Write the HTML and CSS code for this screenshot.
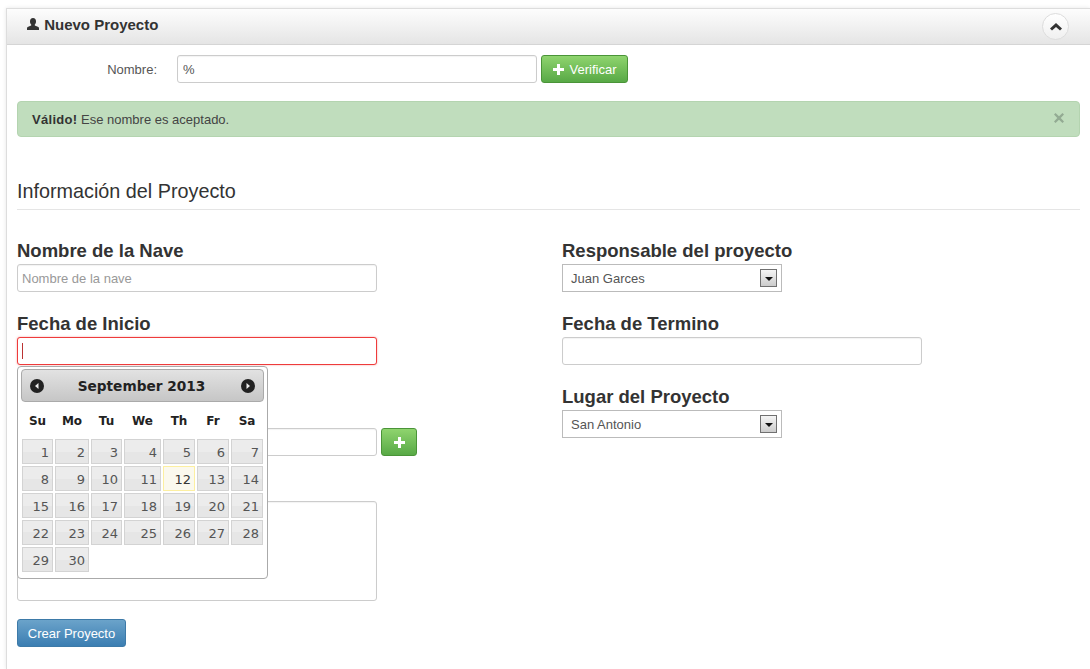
FILE: index.html
```html
<!DOCTYPE html>
<html lang="es">

<head>
    <meta charset="UTF-8">
    <title>Nuevo Proyecto</title>
    <link rel="stylesheet" href="styles.css">
</head>

<body>
    <div class="box">
        <div class="box-header">
            <h2>
                <svg class="icon-user" width="12" height="12" viewBox="0 0 12 12"><path d="M6 0c2 0 3 1.500 3 3.500 0 1.300-.5 2.500-1.200 3.100v1l3 1.200c.8.300 1.200.8 1.200 1.500V12H0v-1.700c0-.7.4-1.200 1.200-1.500l3-1.200v-1C3.500 6 3 4.800 3 3.500 3 1.500 4 0 6 0z" fill="#333"/></svg>
                Nuevo Proyecto
            </h2>
            <a class="collapse" href="#">
                <svg width="12" height="8" viewBox="0 0 12 8"><path d="M6 0l6 5.500-2 2L6 4 2 7.500l-2-2z" fill="#333"/></svg>
            </a>
        </div>

        <div class="box-content">
            <form>
                <div class="check-row">
                    <label class="check-label">Nombre:</label>
                    <input class="input check-input" type="text" value="%">
                    <button class="btn btn-green" type="button">
                        <svg width="11" height="11" viewBox="0 0 11 11"><path d="M4 0h3v4h4v3H7v4H4V7H0V4h4z" fill="#fff"/></svg>
                        Verificar
                    </button>
                </div>

                <div class="alert">
                    <span><b>Válido!</b> Ese nombre es aceptado.</span>
                    <svg class="alert-close" width="10" height="10" viewBox="0 0 10 10"><path d="M1.500 0L5 3.300 8.500 0 10 1.500 6.700 5 10 8.500 8.500 10 5 6.700 1.500 10 0 8.500 3.300 5 0 1.500z" fill="#93ab93"/></svg>
                </div>

                <h3 class="section-title">Información del Proyecto</h3>

                <div class="columns">
                    <div class="col-left">
                        <div class="group">
                            <label>Nombre de la Nave</label>
                            <input class="input" type="text" placeholder="Nombre de la nave">
                        </div>
                        <div class="group date-group">
                            <label>Fecha de Inicio</label>
                            <div class="input input-focus"><span class="caret"></span></div>

                            <div class="datepicker">
                                <div class="dp-header">
                                    <svg width="14" height="14" viewBox="0 0 14 14"><circle cx="7" cy="7" r="7" fill="#222"/><path d="M8.500 4v6L5 7z" fill="#eee"/></svg>
                                    <span class="dp-title">September 2013</span>
                                    <svg width="14" height="14" viewBox="0 0 14 14"><circle cx="7" cy="7" r="7" fill="#222"/><path d="M5.500 4v6L9 7z" fill="#eee"/></svg>
                                </div>
                                <div class="dp-grid dp-week">
                                    <span>Su</span><span>Mo</span><span>Tu</span><span>We</span><span>Th</span><span>Fr</span><span>Sa</span>
                                </div>
                                <div class="dp-grid dp-days">
                                    <a>1</a><a>2</a><a>3</a><a>4</a><a>5</a><a>6</a><a>7</a>
                                    <a>8</a><a>9</a><a>10</a><a>11</a><a class="today">12</a><a>13</a><a>14</a>
                                    <a>15</a><a>16</a><a>17</a><a>18</a><a>19</a><a>20</a><a>21</a>
                                    <a>22</a><a>23</a><a>24</a><a>25</a><a>26</a><a>27</a><a>28</a>
                                    <a>29</a><a>30</a>
                                </div>
                            </div>
                        </div>
                        <div class="group group-third">
                            <label>&nbsp;</label>
                            <div class="with-btn">
                                <input class="input" type="text">
                                <button class="btn btn-green btn-plus" type="button">
                                    <svg width="11" height="11" viewBox="0 0 11 11"><path d="M4 0h3v4h4v3H7v4H4V7H0V4h4z" fill="#fff"/></svg>
                                </button>
                            </div>
                        </div>
                        <div class="group group-area">
                            <label>&nbsp;</label>
                            <textarea class="input area"></textarea>
                        </div>
                        <button class="btn btn-blue" type="button">Crear Proyecto</button>
                    </div>

                    <div class="col-right">
                        <div class="group">
                            <label>Responsable del proyecto</label>
                            <div class="select"><span>Juan Garces</span><i class="select-arrow"></i></div>
                        </div>
                        <div class="group">
                            <label>Fecha de Termino</label>
                            <input class="input" type="text">
                        </div>
                        <div class="group">
                            <label>Lugar del Proyecto</label>
                            <div class="select"><span>San Antonio</span><i class="select-arrow"></i></div>
                        </div>
                    </div>
                </div>
            </form>
        </div>
    </div>
</body>

</html>
```

FILE: styles.css
```css
* {
    box-sizing: border-box;
}

html,
body {
    height: 669px;
    overflow: hidden;
}

body {
    margin: 0;
    background-color: #fff;
    font-family: "Liberation Sans", Arial, sans-serif;
    font-size: 13px;
    color: #555;
}

.box {
    margin: 8px 0 0 6px;
    height: 661px;
    border-left: 1px solid #ddd;
    border-top: 1px solid #ddd;
    box-shadow: 0 0 4px rgba(0, 0, 0, .1);
}

.box-header {
    display: flex;
    align-items: center;
    justify-content: space-between;
    height: 36px;
    padding: 0 21px 0 20px;
    background: linear-gradient(to bottom, #fdfdfd, #e5e5e5);
    border-bottom: 1px solid #d5d5d5;
}

.box-header h2 {
    margin: 0 0 5px;
    font-size: 15px;
    font-weight: bold;
    color: #333;
}

.icon-user {
    margin-right: 1px;
}

.collapse {
    display: flex;
    align-items: center;
    justify-content: center;
    width: 27px;
    height: 27px;
    background: linear-gradient(to bottom, #fff, #f0f0f0);
    border: 1px solid #ddd;
    border-radius: 50%;
}

.collapse svg {
    display: block;
}

.box-content {
    padding: 10px 10px 0;
}

.check-row {
    display: flex;
    align-items: center;
    gap: 4px;
}

.check-label {
    width: 156px;
    padding-right: 16px;
    text-align: right;
    color: #555;
}

.input {
    display: block;
    width: 360px;
    height: 28px;
    padding: 4px 4px;
    background-color: #fff;
    border: 1px solid #ccc;
    border-radius: 3px;
    font-family: inherit;
    font-size: 13px;
    color: #555;
    box-shadow: inset 0 1px 1px rgba(0, 0, 0, .05);
    outline: none;
}

.input::placeholder {
    color: #999;
}

.check-input {
    padding-left: 5px;
}

.input-focus {
    border-color: #ee3b3b;
    box-shadow: 0 0 2px rgba(238, 59, 59, .5);
}

.caret {
    display: block;
    width: 1px;
    height: 16px;
    margin-top: 1px;
    background-color: #b33;
}

.btn {
    display: inline-flex;
    align-items: center;
    justify-content: center;
    height: 28px;
    border: 1px solid #4a9438;
    border-radius: 3px;
    font-family: inherit;
    font-size: 13px;
    color: #fff;
}

.btn-green {
    gap: 6px;
    width: 87px;
    padding: 0;
    background: linear-gradient(to bottom, #8fd46e, #58a946);
}

.btn-plus {
    width: 36px;
}

.btn-blue {
    width: 109px;
    padding: 0;
    background: linear-gradient(to bottom, #6ba3ca, #3b7eb2);
    border-color: #3d7aa8;
}

.alert {
    display: flex;
    align-items: center;
    justify-content: space-between;
    height: 36px;
    margin-top: 18px;
    padding: 0 15px 0 14px;
    background-color: #c0ddbd;
    border: 1px solid #b4d4b0;
    border-radius: 4px;
    color: #444;
}

.alert b {
    color: #333;
    letter-spacing: .3px;
}

.alert-close {
    margin-bottom: 2px;
}

.section-title {
    margin: 0 0 26px;
    padding: 43px 0 7px;
    font-size: 19.8px;
    font-weight: normal;
    line-height: 22px;
    color: #333;
    border-bottom: 1px solid #e5e5e5;
}

.columns {
    display: flex;
}

.col-left {
    width: 545px;
}

.group {
    position: relative;
    margin-bottom: 17px;
}

.group label {
    display: block;
    height: 28px;
    font-size: 18.5px;
    font-weight: bold;
    line-height: 29px;
    color: #333;
}

.group-third {
    margin-top: 35px;
}

.group-area {
    margin-bottom: 18px;
}

.with-btn {
    display: flex;
    gap: 4px;
}

.area {
    height: 100px;
    resize: none;
}

.select {
    display: flex;
    align-items: center;
    justify-content: space-between;
    width: 220px;
    height: 28px;
    padding: 0 4px 0 8px;
    border: 1px solid #bbb;
    color: #555;
}

.select-arrow {
    position: relative;
    display: block;
    width: 17px;
    height: 18px;
    background: linear-gradient(to bottom, #f5f5f5, #ccc);
    border: 1px solid #707070;
}

.select-arrow::after {
    content: "";
    position: absolute;
    left: 4px;
    top: 7px;
    border: 4px solid transparent;
    border-top: 4px solid #111;
    border-bottom: 0;
}

.datepicker {
    position: absolute;
    top: 57px;
    left: 0;
    z-index: 10;
    width: 251px;
    height: 213px;
    padding: 2px 3px 3px;
    background-color: #fff;
    border: 1px solid #aaa;
    border-radius: 4px;
    font-family: "DejaVu Sans", Verdana, sans-serif;
}

.dp-header {
    display: flex;
    align-items: center;
    justify-content: space-between;
    height: 33px;
    padding: 0 8px;
    background: linear-gradient(to bottom, #e2e2e2, #c6c6c6);
    border: 1px solid #aaa;
    border-radius: 4px;
    font-size: 13.7px;
    font-weight: bold;
    color: #222;
}

.dp-title {
    margin-right: 2px;
}

.dp-grid {
    display: grid;
    grid-template-columns: 31px 34px 31px 37px 32px 32px 32px;
    column-gap: 2px;
    margin-left: 1px;
}

.dp-week {
    height: 37px;
    align-items: center;
    font-size: 12px;
    font-weight: bold;
    text-align: center;
    color: #222;
}

.dp-days {
    row-gap: 2px;
}

.dp-days a {
    height: 25px;
    padding: 4px 3px 0 0;
    background: linear-gradient(to bottom, #ececec 50%, #e6e6e6 50%);
    border: 1px solid #d3d3d3;
    font-size: 13px;
    line-height: 17px;
    text-align: right;
    color: #555;
}

.dp-days .today {
    background: #fbf9ee;
    border-color: #fcefa1;
    color: #363636;
}
```
